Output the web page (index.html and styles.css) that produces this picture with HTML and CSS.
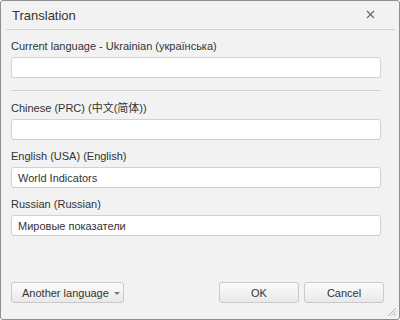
FILE: index.html
```html
<!DOCTYPE html>
<html lang="en">
<head>
<meta charset="UTF-8">
<title>Translation</title>
<link rel="stylesheet" href="styles.css">
</head>
<body>

<div class="dialog">
    <div class="dialog-header">
        <span class="dialog-title">Translation</span>
        <span class="close-btn">
            <svg width="9" height="9" viewBox="0 0 9 9">
                <path d="M1 1 L8 8 M8 1 L1 8" stroke="#6a6a6a" stroke-width="1.2" fill="none"/>
            </svg>
        </span>
    </div>

    <div class="dialog-body">
        <div class="field first">
            <label for="current">Current language - Ukrainian (українська)</label>
            <input type="text" id="current" value="">
        </div>
        <div class="separator"></div>
        <div class="field after-sep">
            <label for="chinese">Chinese (PRC) (中文(简体))</label>
            <input type="text" id="chinese" value="">
        </div>
        <div class="field">
            <label for="english">English (USA) (English)</label>
            <input type="text" id="english" value="World Indicators">
        </div>
        <div class="field">
            <label for="russian">Russian (Russian)</label>
            <input type="text" id="russian" value="Мировые показатели">
        </div>
    </div>

    <div class="dialog-footer">
        <button class="btn btn-lang">Another language <span class="caret"></span></button>
        <div class="footer-right">
            <button class="btn btn-ok">OK</button>
            <button class="btn btn-cancel">Cancel</button>
        </div>
    </div>

    <svg class="grip" width="10" height="10" viewBox="0 0 10 10">
        <path d="M9 1 L1 9 M9 4 L4 9 M9 7 L7 9" stroke="#b5b5b5" stroke-width="1" fill="none"/>
    </svg>
</div>

</body>
</html>
```

FILE: styles.css
```css
body {
    margin: 0;
    padding: 0;
    font-family: "Liberation Sans", Arial, "Noto Sans CJK SC", sans-serif;
    font-size: 11px;
    color: #333;
    background: #ffffff;
}

.dialog {
    position: relative;
    width: 400px;
    height: 320px;
    box-sizing: border-box;
    border: 1px solid #8e8e8e;
    border-radius: 3px;
    background-color: #f2f2f2;
    display: flex;
    flex-direction: column;
}

.dialog-header {
    height: 28px;
    margin: 0 4px 0 5px;
    border-bottom: 1px solid #d4d4d4;
    display: flex;
    align-items: center;
    justify-content: space-between;
}

.dialog-title {
    padding-left: 6px;
    padding-top: 1px;
    font-size: 13px;
    color: #333;
}

.close-btn {
    display: flex;
    margin-right: 20px;
    margin-top: -1px;
}

.dialog-body {
    padding: 9px 18px 0 10px;
}

.field {
    display: flex;
    flex-direction: column;
    margin-top: 9px;
}

.field.first {
    margin-top: 0;
}

.field.after-sep {
    margin-top: 10px;
}

label {
    display: block;
    line-height: 14px;
    margin-bottom: 4px;
}

input[type="text"] {
    height: 21px;
    box-sizing: border-box;
    border: 1px solid #d2d2d2;
    border-radius: 3px;
    background: #ffffff;
    padding: 0 6px;
    font-family: inherit;
    font-size: 11px;
    color: #333;
    outline: none;
}

.separator {
    height: 1px;
    background: #d4d4d4;
    margin-top: 12px;
}

.dialog-footer {
    margin-top: auto;
    padding: 0 15px 16px 10px;
    display: flex;
    justify-content: space-between;
}

.footer-right {
    display: flex;
    gap: 5px;
}

.btn {
    height: 21px;
    box-sizing: border-box;
    border: 1px solid #c9c9c9;
    border-radius: 3px;
    background: linear-gradient(#fbfbfb, #e9e9e9);
    font-family: inherit;
    font-size: 11px;
    color: #333;
    padding: 0;
    cursor: pointer;
}

.btn-lang {
    width: 113px;
    display: flex;
    align-items: center;
    padding-left: 10px;
    gap: 5px;
}

.caret {
    width: 0;
    height: 0;
    border-left: 3px solid transparent;
    border-right: 3px solid transparent;
    border-top: 3px solid #777;
    margin-top: 1px;
}

.btn-ok,
.btn-cancel {
    width: 80px;
}

.grip {
    position: absolute;
    right: 2px;
    bottom: 2px;
}
```
